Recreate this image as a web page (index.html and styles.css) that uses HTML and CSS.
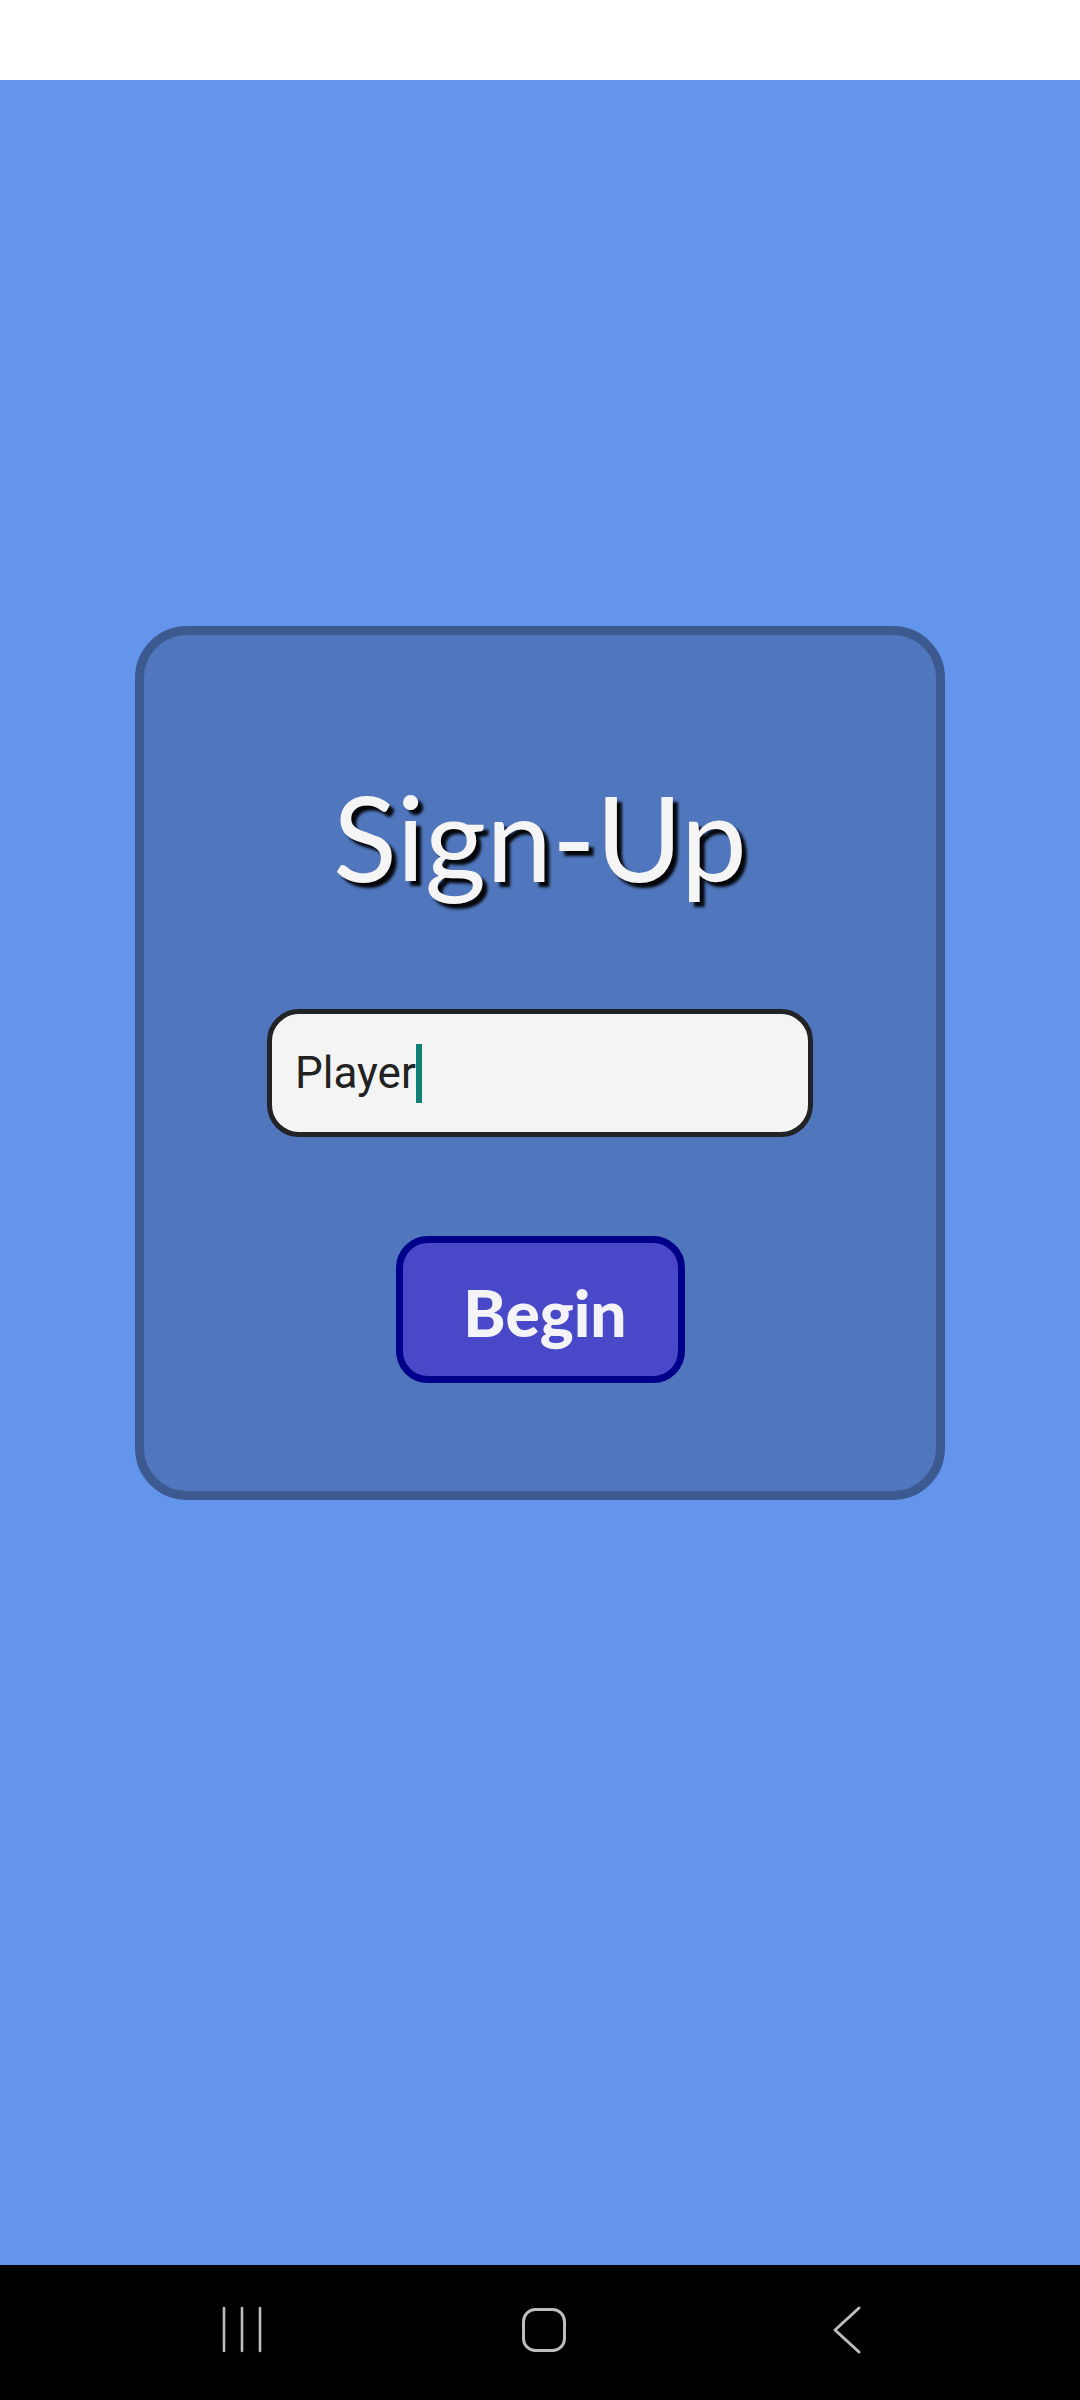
FILE: index.html
```html
<!DOCTYPE html>
<html>
<head>
<meta charset="utf-8">
<link rel="stylesheet" href="styles.css">
</head>
<body>
<div class="status"></div>
<main class="main">
  <section class="card">
    <h1 class="title">Sign-Up</h1>
    <div class="field"><span class="field-text">Player</span><span class="caret"></span></div>
    <button class="begin">Begin</button>
  </section>
</main>
<nav class="navbar">
  <svg class="nav-icon nav-recent" width="60" height="60" viewBox="0 0 60 60">
    <path d="M12 8 V51 M30 8 V51 M48 8 V51" stroke="#bdbdbd" stroke-width="2.6" stroke-linecap="round" fill="none"/>
  </svg>
  <svg class="nav-icon nav-home" width="60" height="60" viewBox="0 0 60 60">
    <rect x="11.5" y="9.5" width="41" height="41" rx="12" ry="12" stroke="#bdbdbd" stroke-width="3" fill="none"/>
  </svg>
  <svg class="nav-icon nav-back" width="60" height="60" viewBox="0 0 60 60">
    <path d="M54 8 L30 30 L54 52" stroke="#bdbdbd" stroke-width="3" stroke-linecap="round" stroke-linejoin="round" fill="none"/>
  </svg>
</nav>
</body>
</html>
```

FILE: styles.css
```css
html, body {
  margin: 0;
  padding: 0;
}
body {
  width: 1080px;
  height: 2400px;
  display: flex;
  flex-direction: column;
  font-family: "Lato", "Noto Sans", sans-serif;
  background: #6495ed;
}
.status {
  height: 80px;
  background: #ffffff;
  flex: none;
}
.main {
  flex: 1;
  background: #6495ed;
  display: flex;
  flex-direction: column;
  align-items: center;
  padding-top: 546px;
  box-sizing: border-box;
}
.card {
  width: 810px;
  box-sizing: border-box;
  border: 9px solid #3c5a8f;
  border-radius: 52px;
  background: #5077bd;
  display: flex;
  flex-direction: column;
  align-items: center;
  padding: 131px 0 108px;
}
.title {
  margin: 0;
  font-family: "Lato", sans-serif;
  font-weight: 400;
  font-size: 118px;
  line-height: 142px;
  color: #f5f5f5;
  text-shadow: 5px 5px 3px rgba(0,0,0,0.95);
}
.field {
  margin-top: 101px;
  width: 546px;
  height: 128px;
  box-sizing: border-box;
  border: 5px solid #222326;
  border-radius: 32px;
  background: #f4f4f4;
  display: flex;
  align-items: center;
  padding-left: 23px;
}
.field-text {
  font-family: "Roboto", sans-serif;
  font-size: 44px;
  line-height: 52px;
  color: #222222;
}
.caret {
  width: 6px;
  height: 59px;
  background: #0e8074;
}
.begin {
  margin-top: 99px;
  width: 289px;
  height: 147px;
  box-sizing: border-box;
  border: 7px solid #00008b;
  border-radius: 32px;
  background: #4848c8;
  color: #f4f4f8;
  font-family: "Lato", sans-serif;
  font-weight: 900;
  font-size: 64px;
  line-height: 1;
  padding: 6px 0 0 10px;
}
.navbar {
  height: 135px;
  flex: none;
  background: #000000;
  display: flex;
  align-items: flex-start;
  padding: 35px 0 0 212px;
  box-sizing: border-box;
}
.nav-icon {
  display: block;
  flex: none;
}
.nav-home {
  margin-left: 240px;
}
.nav-back {
  margin-left: 233px;
}
```
